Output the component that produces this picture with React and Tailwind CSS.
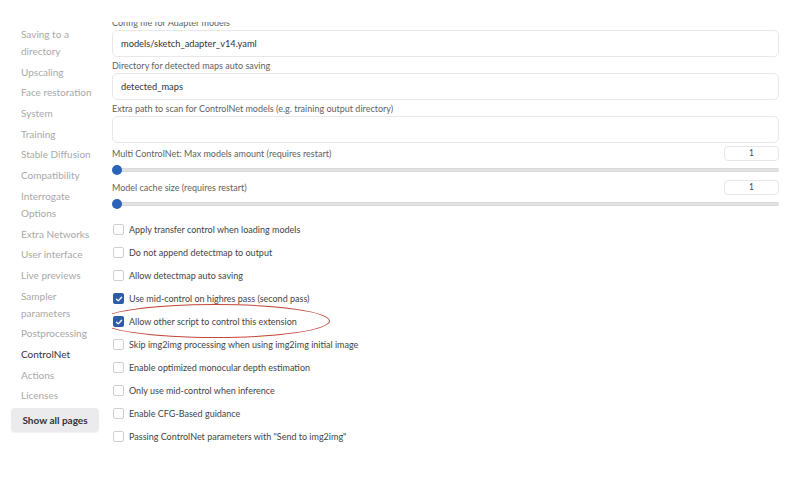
import React from 'react';

const pages = [
  ['Saving to a', 'directory'],
  ['Upscaling'],
  ['Face restoration'],
  ['System'],
  ['Training'],
  ['Stable Diffusion'],
  ['Compatibility'],
  ['Interrogate', 'Options'],
  ['Extra Networks'],
  ['User interface'],
  ['Live previews'],
  ['Sampler', 'parameters'],
  ['Postprocessing'],
  ['ControlNet'],
  ['Actions'],
  ['Licenses'],
];

const options = [
  { label: 'Apply transfer control when loading models', checked: false },
  { label: 'Do not append detectmap to output', checked: false },
  { label: 'Allow detectmap auto saving', checked: false },
  { label: 'Use mid-control on highres pass (second pass)', checked: true },
  { label: 'Allow other script to control this extension', checked: true, circled: true },
  { label: 'Skip img2img processing when using img2img initial image', checked: false },
  { label: 'Enable optimized monocular depth estimation', checked: false },
  { label: 'Only use mid-control when inference', checked: false },
  { label: 'Enable CFG-Based guidance', checked: false },
  { label: 'Passing ControlNet parameters with "Send to img2img"', checked: false },
];

const TextField = ({ label, value }) => (
  <div className="flex flex-col">
    <span className="h-[14px] leading-[14px] text-[9px] text-[#5f5f5f] whitespace-nowrap">{label}</span>
    <div className="h-[27px] rounded-[5px] border border-[#e8e8ea] bg-white px-[8px] flex items-center text-[9.3px] text-[#333]">
      {value}
    </div>
  </div>
);

const SliderField = ({ label, value }) => (
  <div className="flex flex-col">
    <div className="h-[17px] flex items-center justify-between">
      <span className="text-[9px] text-[#5f5f5f]">{label}</span>
      <div className="w-[55px] h-[15px] rounded-[4px] border border-[#e6e6e8] flex items-center justify-center text-[8.5px] text-[#444]">
        {value}
      </div>
    </div>
    <div className="h-[12px] mt-[2px] flex items-center relative">
      <div className="flex-1 h-[4px] ml-[3px] rounded-full bg-[#e3e3e3] border border-[#d8d8d8]" />
      <div className="absolute left-0 w-[10px] h-[10px] rounded-full bg-[#2a63b8]" />
    </div>
  </div>
);

const Checkbox = ({ checked }) =>
  checked ? (
    <div className="w-[11px] h-[11px] rounded-[2px] bg-[#2d5ba6] flex items-center justify-center shrink-0">
      <svg width="8" height="8" viewBox="0 0 8 8" fill="none">
        <path d="M1.5 4.2 L3.3 5.9 L6.6 2.2" stroke="white" strokeWidth="1.3" strokeLinecap="round" strokeLinejoin="round" />
      </svg>
    </div>
  ) : (
    <div className="w-[11px] h-[11px] rounded-[2px] border border-[#cfcfd3] bg-white shrink-0" />
  );

export default function App() {
  return (
    <div
      className="w-[800px] h-[502px] bg-white flex overflow-hidden"
      style={{ fontFamily: '"Lato", "Liberation Sans", sans-serif' }}
    >
      {/* Settings page list */}
      <div className="w-[112px] shrink-0 pt-[26px] pl-[11px]">
        <div className="flex flex-col gap-[3.7px] pl-[10px]">
          {pages.map((lines) => (
            <div
              key={lines[0]}
              className={`flex flex-col text-[10px] leading-[17px] whitespace-nowrap ${lines[0] === 'ControlNet' ? 'text-[#333]' : 'text-[#a8a8a8]'}`}
            >
              {lines.map((l) => (
                <span key={l}>{l}</span>
              ))}
            </div>
          ))}
        </div>
        <button className="mt-[4px] w-[88px] h-[24px] rounded-[4px] bg-[#ebebed] text-[10px] font-bold text-[#333] shadow-[0_1px_1px_rgba(0,0,0,0.06)]">
          Show all pages
        </button>
      </div>

      {/* ControlNet settings */}
      <div className="w-[667px] mt-[22px] h-[480px] overflow-hidden">
        <div className="-mt-[6px] flex flex-col">
          <div className="flex flex-col gap-[2px]">
            <TextField label="Config file for Adapter models" value="models/sketch_adapter_v14.yaml" />
            <TextField label="Directory for detected maps auto saving" value="detected_maps" />
            <TextField label="Extra path to scan for ControlNet models (e.g. training output directory)" value="" />
          </div>
          <div className="mt-[2px]">
            <SliderField label="Multi ControlNet: Max models amount (requires restart)" value="1" />
          </div>
          <div className="mt-[3px]">
            <SliderField label="Model cache size (requires restart)" value="1" />
          </div>
          <div className="mt-[8px] flex flex-col">
            {options.map((o) => (
              <div key={o.label} className="h-[23px] flex items-center gap-[5px] pl-[1px] relative">
                <Checkbox checked={o.checked} />
                <span className="text-[9px] text-[#444]">{o.label}</span>
                {o.circled && (
                  <div className="absolute left-[-12px] top-[-6px] w-[230px] h-[34px] rounded-[50%] border-[1.5px] border-[#c0473a]" />
                )}
              </div>
            ))}
          </div>
        </div>
      </div>
    </div>
  );
}
